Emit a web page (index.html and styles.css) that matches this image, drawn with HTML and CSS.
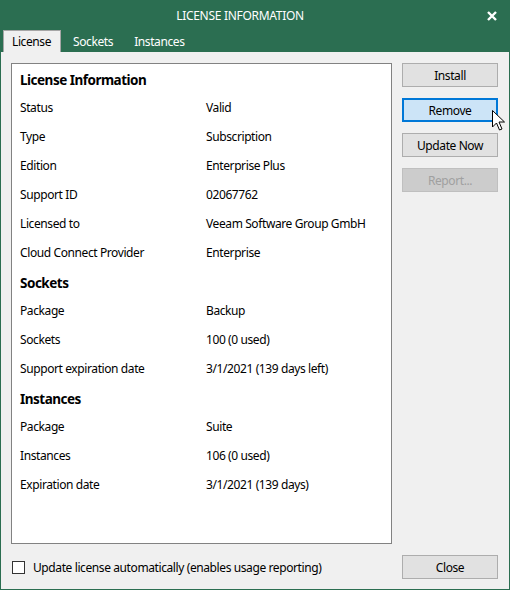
FILE: index.html
```html
<!DOCTYPE html>
<html lang="en">
<head>
    <meta charset="UTF-8">
    <title>License Information</title>
    <link rel="stylesheet" href="styles.css">
</head>
<body>
    <div class="window">
        <div class="titlebar">
            <span class="title">LICENSE INFORMATION</span>
            <svg class="close-x" width="10" height="10" viewBox="0 0 10 10">
                <path d="M1 1 L9 9 M9 1 L1 9" stroke="#fff" stroke-width="2.4"/>
            </svg>
        </div>
        <div class="tabs">
            <div class="tab active">License</div>
            <div class="tab">Sockets</div>
            <div class="tab">Instances</div>
        </div>

        <div class="content">
            <div class="panel">
                <div class="group">License Information</div>
                <div class="row"><span class="key">Status</span><span>Valid</span></div>
                <div class="row"><span class="key">Type</span><span>Subscription</span></div>
                <div class="row"><span class="key">Edition</span><span>Enterprise Plus</span></div>
                <div class="row"><span class="key">Support ID</span><span>02067762</span></div>
                <div class="row"><span class="key">Licensed to</span><span>Veeam Software Group GmbH</span></div>
                <div class="row"><span class="key">Cloud Connect Provider</span><span>Enterprise</span></div>

                <div class="group">Sockets</div>
                <div class="row"><span class="key">Package</span><span>Backup</span></div>
                <div class="row"><span class="key">Sockets</span><span>100 (0 used)</span></div>
                <div class="row"><span class="key">Support expiration date</span><span>3/1/2021 (139 days left)</span></div>

                <div class="group">Instances</div>
                <div class="row"><span class="key">Package</span><span>Suite</span></div>
                <div class="row"><span class="key">Instances</span><span>106 (0 used)</span></div>
                <div class="row"><span class="key">Expiration date</span><span>3/1/2021 (139 days)</span></div>
            </div>

            <div class="actions">
                <button class="btn">Install</button>
                <button class="btn focused">Remove</button>
                <button class="btn">Update Now</button>
                <button class="btn" disabled>Report...</button>
                <svg class="cursor" width="13" height="21" viewBox="0 0 13 21">
                    <path d="M0.5 0.5 L0.5 17 L4.5 13 L7.5 20 L10 19 L7 12 L12.5 12 Z" fill="#fff" stroke="#000" stroke-width="1"/>
                </svg>
            </div>

            <label class="auto-update">
                <span class="checkbox"></span>
                Update license automatically (enables usage reporting)
            </label>
            <button class="btn">Close</button>
        </div>
    </div>
</body>
</html>
```

FILE: styles.css
```css
body {
    margin: 0;
    padding: 0;
    font-family: "Noto Sans", "Open Sans", sans-serif;
    font-size: 12px;
    letter-spacing: -0.4px;
    color: #000;
    background-color: #fff;
}
.window {
    width: 510px;
    height: 590px;
    box-sizing: border-box;
    background-color: #2b6e51;
    padding: 0 1px 1px 1px;
    display: flex;
    flex-direction: column;
}
.titlebar {
    height: 30px;
    position: relative;
    display: flex;
    align-items: center;
    justify-content: center;
    padding-right: 30px;
    color: #fff;
}
.title {
    font-size: 12px;
    letter-spacing: -0.3px;
}
.close-x {
    position: absolute;
    right: 12px;
    top: 11px;
}
.tabs {
    height: 22px;
    display: flex;
    padding-left: 2px;
}
.tab {
    color: #fff;
    padding: 0 10px 0 9px;
    line-height: 22px;
    border: 1px solid transparent;
    border-bottom: none;
}
.tab.active {
    color: #000;
    background-color: #f0f0f0;
    border-color: #a6a6a6;
    padding: 0 9px 0 8px;
    margin-right: 2px;
}
.content {
    flex: 1;
    background-color: #f0f0f0;
    padding: 11px 11px 10px 10px;
    display: grid;
    grid-template-columns: 381px 96px;
    grid-template-rows: 481px 24px;
    column-gap: 10px;
    row-gap: 11px;
}
.panel {
    background-color: #fff;
    border: 1px solid #828282;
    padding: 0 0 0 8px;
}
.group {
    height: 25px;
    padding-top: 4px;
    line-height: 25px;
    font-weight: bold;
    font-size: 13.5px;
    letter-spacing: -0.5px;
}
.row {
    height: 29px;
    line-height: 29px;
    display: flex;
}
.key {
    width: 186px;
}
.actions {
    display: flex;
    flex-direction: column;
    gap: 11px;
    position: relative;
}
.btn {
    height: 24px;
    font-family: inherit;
    font-size: 12px;
    letter-spacing: -0.4px;
    color: #000;
    background-color: #e1e1e1;
    border: 1px solid #adadad;
    padding: 0;
}
.btn.focused {
    background-color: #cce4f7;
    border: 2px solid #0078d7;
}
.btn:disabled {
    background-color: #cccccc;
    border-color: #bfbfbf;
    color: #a0a0a0;
}
.cursor {
    position: absolute;
    left: 90px;
    top: 47px;
}
.auto-update {
    display: flex;
    align-items: center;
    gap: 8px;
    padding-left: 1px;
}
.checkbox {
    width: 11px;
    height: 11px;
    border: 1px solid #333;
    background-color: #fff;
}
```
